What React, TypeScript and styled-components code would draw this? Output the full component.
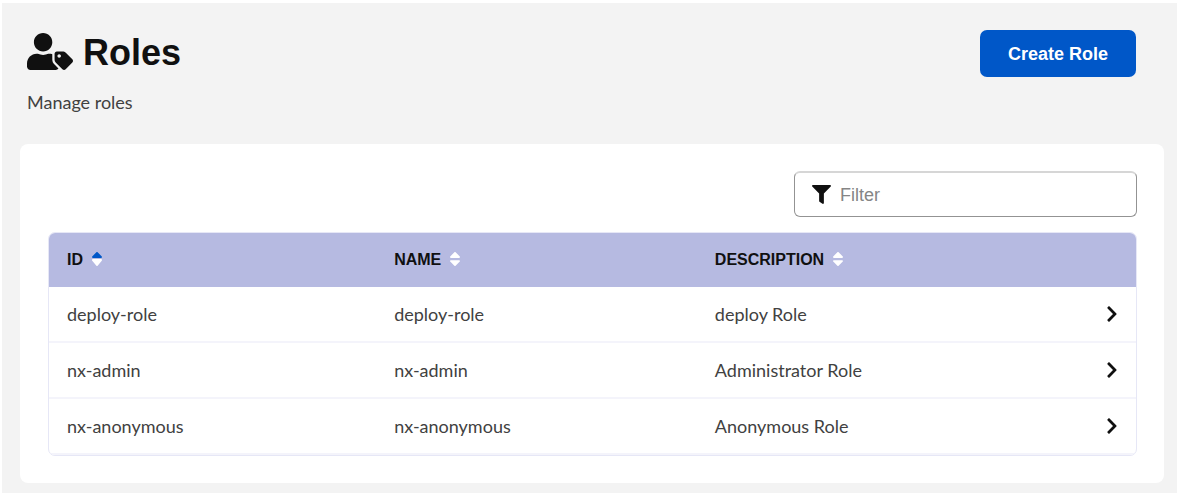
import React from "react";
import styled, { createGlobalStyle } from "styled-components";
import { FaChevronRight, FaFilter, FaUserTag } from "react-icons/fa";

const GlobalStyle = createGlobalStyle`
  *, *::before, *::after { box-sizing: border-box; }
  body {
    margin: 0;
    background: #ffffff;
    color: #414141;
    font: 400 18px/24px Lato, "Noto Sans", sans-serif;
  }
`;

const Page = styled.main`
  margin: 3px 15px 7px 2px;
  padding: 27px 13px 10px 18px;
  background: #f3f3f3;
`;

const PageHeader = styled.header`
  display: flex;
  align-items: flex-start;
  justify-content: space-between;
  padding: 0 28px 0 7px;
`;

const Title = styled.h1`
  display: flex;
  align-items: center;
  gap: 10px;
  margin: 0;
  color: #101010;
  font: 700 36px/46px "Liberation Sans", Arial, sans-serif;
`;

const TitleIcon = styled(FaUserTag)`
  width: 46px;
  height: 37px;
  margin-bottom: 4px;
`;

const Subtitle = styled.p`
  margin: 14px 0 0;
`;

const PrimaryButton = styled.button`
  height: 47px;
  padding: 0 28px;
  border: 0;
  border-radius: 7px;
  background: #0057c8;
  color: #ffffff;
  font: 700 18px/24px "Liberation Sans", Arial, sans-serif;
  cursor: pointer;
`;

const Card = styled.section`
  margin-top: 30px;
  padding: 27px 27px 27px 28px;
  border-radius: 8px;
  background: #ffffff;
`;

const FilterBox = styled.label`
  display: flex;
  align-items: center;
  gap: 9px;
  width: 343px;
  height: 46px;
  margin: 0 0 15px auto;
  padding: 0 17px;
  border: 1px solid #939393;
  border-top: 2px solid #d6d6d6;
  border-radius: 6px;
  color: #101010;
`;

const FilterInput = styled.input`
  flex: 1;
  min-width: 0;
  padding: 0;
  border: 0;
  outline: 0;
  background: transparent;
  color: #101010;
  font: 400 18px/24px "Liberation Sans", Arial, sans-serif;

  &::placeholder {
    color: #858585;
    opacity: 1;
  }
`;

const TableFrame = styled.div`
  overflow: hidden;
  border: 1px solid #e6e7f6;
  border-radius: 7px;
`;

const Table = styled.table`
  width: 100%;
  table-layout: fixed;
  border-collapse: separate;
  border-spacing: 0;
  text-align: left;
`;

const HeadCell = styled.th<{ $width?: string }>`
  width: ${({ $width }) => $width ?? "auto"};
  height: 54px;
  padding: 0 18px;
  background: #b6bae1;
`;

const SortButton = styled.button`
  display: flex;
  align-items: center;
  gap: 8px;
  padding: 0;
  border: 0;
  background: none;
  color: #101010;
  font: 700 16px/24px "Liberation Sans", Arial, sans-serif;
  cursor: pointer;
`;

const SortGlyph = styled.svg`
  width: 12px;
  height: 18px;
  margin-bottom: 3px;
`;

const Row = styled.tr`
  cursor: pointer;
`;

const Cell = styled.td`
  height: 56px;
  padding: 0 18px;
  border-bottom: 2px solid #f4f4fb;
`;

const OpenButton = styled.button`
  display: flex;
  margin-left: auto;
  padding: 0;
  border: 0;
  background: none;
  color: #101010;
  cursor: pointer;
`;

const Chevron = styled(FaChevronRight)`
  width: 12px;
  height: 18px;
`;

function SortIcon({ ascending = false }: { ascending?: boolean }) {
  return (
    <SortGlyph viewBox="0 0 320 512" aria-hidden="true">
      <path
        fill="#ffffff"
        d={
          ascending
            ? "M41 256h238c21.4 0 32.1 35 17 50L177 448c-9.4 9.4-24.6 9.4-33.9 0L24 306c-15.1-15-4.4-50 17-50z"
            : "M41 288h238c21.4 0 32.1 25.9 17 41L177 448c-9.4 9.4-24.6 9.4-33.9 0L24 329c-15.1-15.1-4.4-41 17-41z"
        }
      />
      <path
        fill={ascending ? "#0057c8" : "#ffffff"}
        d="M296 183L177 64c-9.4-9.4-24.6-9.4-33.9 0L24 183c-15.1 15.1-4.4 41 17 41h238c21.4 0 32.1-25.9 17-41z"
      />
    </SortGlyph>
  );
}

const columns = [
  { label: "ID", width: "30.1%", ascending: true },
  { label: "NAME", width: "29.5%" },
  { label: "DESCRIPTION" },
];

const roles = [
  { id: "deploy-role", name: "deploy-role", description: "deploy Role" },
  { id: "nx-admin", name: "nx-admin", description: "Administrator Role" },
  { id: "nx-anonymous", name: "nx-anonymous", description: "Anonymous Role" },
];

export default function App() {
  return (
    <>
      <GlobalStyle />
      <Page>
        <PageHeader>
          <div>
            <Title>
              <TitleIcon aria-hidden="true" />
              Roles
            </Title>
            <Subtitle>Manage roles</Subtitle>
          </div>
          <PrimaryButton type="button">Create Role</PrimaryButton>
        </PageHeader>
        <Card>
          <FilterBox>
            <FaFilter size={19} aria-hidden="true" />
            <FilterInput type="text" placeholder="Filter" aria-label="Filter" />
          </FilterBox>
          <TableFrame>
            <Table>
              <thead>
                <tr>
                  {columns.map(({ label, width, ascending }) => (
                    <HeadCell
                      key={label}
                      scope="col"
                      $width={width}
                      aria-sort={ascending ? "ascending" : "none"}
                    >
                      <SortButton type="button">
                        {label}
                        <SortIcon ascending={ascending} />
                      </SortButton>
                    </HeadCell>
                  ))}
                  <HeadCell as="td" $width="60px" />
                </tr>
              </thead>
              <tbody>
                {roles.map((role) => (
                  <Row key={role.id}>
                    <Cell>{role.id}</Cell>
                    <Cell>{role.name}</Cell>
                    <Cell>{role.description}</Cell>
                    <Cell>
                      <OpenButton type="button" aria-label={role.id}>
                        <Chevron aria-hidden="true" />
                      </OpenButton>
                    </Cell>
                  </Row>
                ))}
              </tbody>
            </Table>
          </TableFrame>
        </Card>
      </Page>
    </>
  );
}
